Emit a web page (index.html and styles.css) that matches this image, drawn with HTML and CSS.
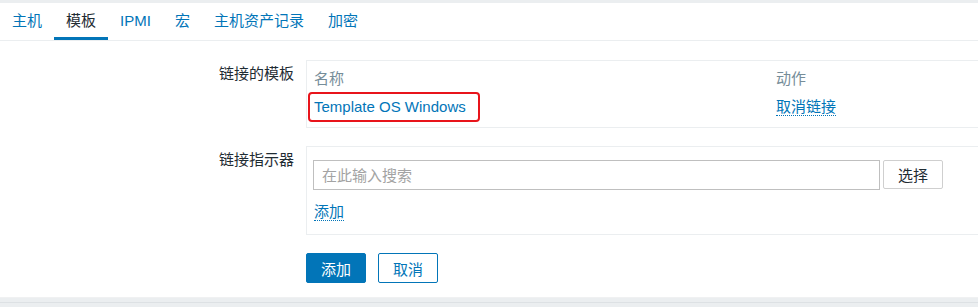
FILE: index.html
```html
<!DOCTYPE html>
<html>

<head>
    <title>主机 - 模板</title>
    <link rel="stylesheet" href="styles.css">
</head>

<body>
    <div class="page">
        <ul class="tabs">
            <li><a href="#">主机</a></li>
            <li class="active"><a href="#">模板</a></li>
            <li><a href="#">IPMI</a></li>
            <li><a href="#">宏</a></li>
            <li><a href="#">主机资产记录</a></li>
            <li><a href="#">加密</a></li>
        </ul>

        <div class="form-list">
            <div class="form-row">
                <label class="form-label">链接的模板</label>
                <div class="form-field">
                    <div class="box">
                        <table class="linked">
                            <colgroup>
                                <col class="col-name">
                                <col>
                            </colgroup>
                            <tr>
                                <th>名称</th>
                                <th>动作</th>
                            </tr>
                            <tr>
                                <td class="name-cell"><a href="#" class="marked">Template OS Windows</a></td>
                                <td><a href="#" class="link-action">取消链接</a></td>
                            </tr>
                        </table>
                    </div>
                </div>
            </div>

            <div class="form-row">
                <label class="form-label">链接指示器</label>
                <div class="form-field">
                    <div class="box box-search">
                        <div class="search-line">
                            <input type="text" class="search-input" placeholder="在此输入搜索">
                            <button class="btn-grey">选择</button>
                        </div>
                        <a href="#" class="link-action add-link">添加</a>
                    </div>
                </div>
            </div>

            <div class="form-row">
                <div></div>
                <div class="form-buttons">
                    <button class="btn-primary">添加</button>
                    <button class="btn-alt">取消</button>
                </div>
            </div>
        </div>
    </div>
    <div class="footer-band"></div>
</body>

</html>
```

FILE: styles.css
```css
body {
    margin: 0;
    font-family: "Liberation Sans", Arial, "Noto Sans CJK SC", sans-serif;
    font-size: 15px;
    color: #1f2c33;
    background-color: #ebeef0;
    overflow: hidden;
}

a {
    color: #0275b8;
    text-decoration: none;
}

.page {
    margin-top: 3px;
    background: #fff;
    border-bottom: 1px solid #f0f1f2;
    padding-bottom: 14px;
    overflow: hidden;
}

.tabs {
    list-style: none;
    margin: 0;
    padding: 0;
    display: flex;
    border-bottom: 1px solid #ebeef0;
}

.tabs a {
    display: block;
    padding: 9px 12px 7px;
    line-height: 18px;
    border-bottom: 3px solid transparent;
}

.tabs .active a {
    color: #1f2c33;
    border-bottom-color: #0275b8;
}

.form-list {
    margin-top: 19px;
    display: flex;
    flex-direction: column;
    gap: 18px;
}

.form-row {
    display: grid;
    grid-template-columns: 294px 1fr;
    column-gap: 12px;
}

.form-label {
    text-align: right;
    padding-top: 5px;
    line-height: 18px;
}

.box {
    width: 720px;
    border: 1px solid #ebeef0;
    padding-bottom: 5px;
}

.linked {
    border-collapse: collapse;
    table-layout: fixed;
    width: 100%;
}

.col-name {
    width: 462px;
}

.linked th {
    text-align: left;
    font-weight: normal;
    color: #768d99;
    line-height: 18px;
    padding: 9px 7px 4px;
}

.linked td {
    padding: 0 7px;
    vertical-align: middle;
}

.linked td.name-cell {
    padding-left: 1px;
}

.marked {
    display: inline-block;
    height: 30px;
    box-sizing: border-box;
    line-height: 22px;
    padding: 2px 12px 2px 4px;
    border: 2px solid #e8141b;
    border-radius: 4px;
}

.link-action {
    display: inline-block;
    line-height: 17px;
    border-bottom: 1px dotted #0275b8;
}

.box-search {
    padding: 13px 0 13px 6px;
}

.search-line {
    display: flex;
    gap: 3px;
}

.search-input {
    width: 567px;
    height: 30px;
    box-sizing: border-box;
    border: 1px solid #bfbfbf;
    padding: 0 8px;
    font: inherit;
    color: #1f2c33;
    outline: none;
}

.search-input::placeholder {
    color: #a3a3a3;
}

.btn-grey {
    width: 60px;
    height: 29px;
    background: #fff;
    border: 1px solid #cfcfcf;
    border-radius: 2px;
    font: inherit;
    color: #1f2c33;
    padding: 0;
}

.add-link {
    margin-top: 13px;
    margin-left: 1px;
}

.form-buttons {
    display: flex;
    gap: 12px;
}

.btn-primary,
.btn-alt {
    width: 60px;
    height: 30px;
    border-radius: 2px;
    font: inherit;
    padding: 0;
    border: 1px solid #0275b8;
}

.btn-primary {
    background: #0275b8;
    color: #fff;
}

.btn-alt {
    background: #fff;
    color: #0275b8;
}

.footer-band {
    margin-top: 4px;
    border-top: 1px solid #dde1e4;
    height: 10px;
}
```
